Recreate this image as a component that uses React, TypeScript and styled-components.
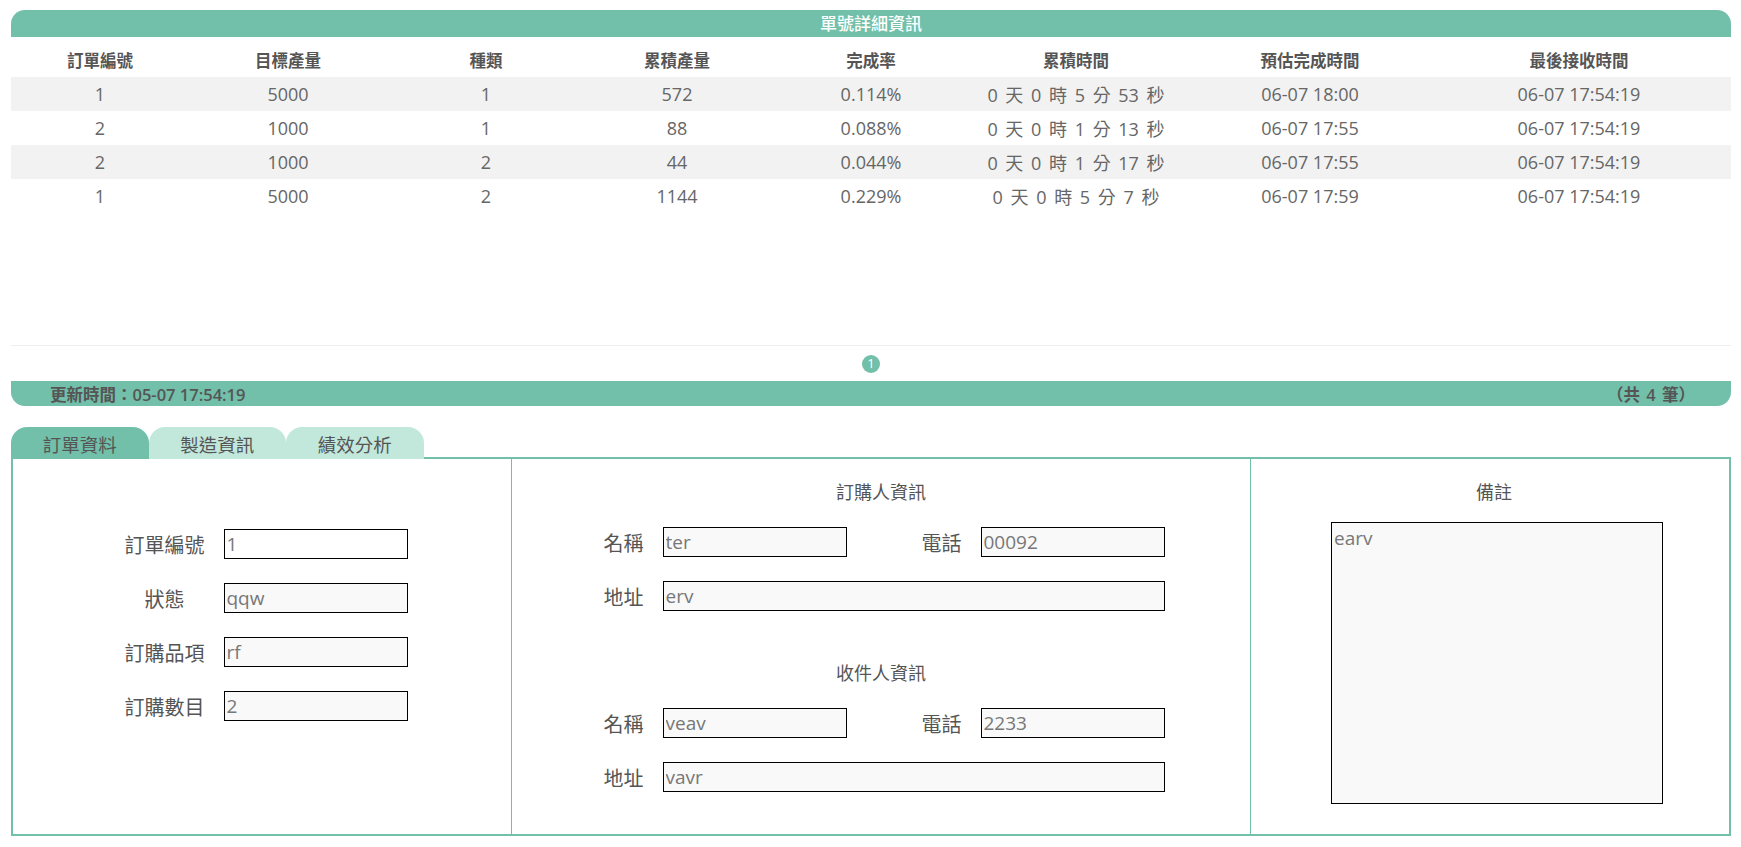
import React from "react";
import styled, { createGlobalStyle } from "styled-components";

const TEAL = "#72bfaa";
const TEAL_LIGHT = "#c2e8dc";
const FONT = `"Open Sans", "Noto Sans CJK TC", sans-serif`;

const Global = createGlobalStyle`
  html, body { margin: 0; padding: 0; background: #fff; }
  body { font-family: ${FONT}; color: #666; }
  * { box-sizing: border-box; }
`;

const Page = styled.div`
  padding: 10px 10px 0 11px;
  display: flex;
  flex-direction: column;
`;

const TitleBar = styled.div`
  height: 27px;
  background: ${TEAL};
  border-radius: 14px 14px 0 0;
  color: #fff;
  font-size: 17px;
  font-weight: 500;
  display: flex;
  align-items: center;
  justify-content: center;
  line-height: 1;
`;

const TableWrap = styled.div`
  min-height: 309px;
  border-bottom: 1px solid #eeeeee;
`;

const COLS = "178px 198px 198px 184px 204px 206px 262px 276px";

const HeadRow = styled.div`
  display: grid;
  grid-template-columns: ${COLS};
  height: 40px;
  align-items: center;
  padding-top: 5px;
`;

const HeadCell = styled.div`
  text-align: center;
  font-size: 16.5px;
  font-weight: 700;
  color: #555;
`;

const Row = styled.div<{ $striped: boolean }>`
  display: grid;
  grid-template-columns: ${COLS};
  height: 34px;
  align-items: center;
  background: ${(p) => (p.$striped ? "#f2f2f2" : "transparent")};
  &:first-of-type { height: 31px; }
`;

const Cell = styled.div<{ $spaced?: boolean }>`
  text-align: center;
  font-size: 18px;
  color: #666;
  white-space: nowrap;
  word-spacing: ${(p) => (p.$spaced ? "3px" : "normal")};
`;

const Pager = styled.div`
  height: 35px;
  display: flex;
  align-items: center;
  justify-content: center;
`;

const PageDot = styled.span`
  width: 18px;
  height: 18px;
  border-radius: 50%;
  background: ${TEAL};
  color: #fff;
  font-size: 13px;
  display: flex;
  align-items: center;
  justify-content: center;
  line-height: 1;
`;

const FooterBar = styled.div`
  height: 25px;
  background: ${TEAL};
  border-radius: 0 0 14px 14px;
  display: flex;
  align-items: center;
  justify-content: space-between;
  padding: 0 36px 0 39px;
  font-size: 16.5px;
  font-weight: 600;
  color: #555;
`;

const Count = styled.span`
  word-spacing: 2px;
`;

const Tabs = styled.div`
  display: flex;
  margin-top: 21px;
  margin-bottom: -2px;
  position: relative;
  z-index: 1;
`;

const Tab = styled.div<{ $active?: boolean }>`
  width: 137.5px;
  height: 32px;
  border-radius: 16px 16px 0 0;
  background: ${(p) => (p.$active ? TEAL : TEAL_LIGHT)};
  color: #555;
  font-size: 18.5px;
  display: flex;
  align-items: center;
  justify-content: center;
  padding-top: 2px;
`;

const Panel = styled.div`
  height: 379px;
  border: 2px solid ${TEAL};
  display: grid;
  grid-template-columns: 499px 739px 1fr;
`;

const Column = styled.div<{ $divider?: boolean }>`
  border-right: ${(p) => (p.$divider ? `1px solid ${TEAL}` : "none")};
  display: flex;
  flex-direction: column;
  align-items: center;
  padding-top: 20px;
`;

const LeftGrid = styled.div`
  margin-top: 50px;
  margin-left: 8px;
  display: grid;
  grid-template-columns: 80px 184px;
  column-gap: 19px;
  row-gap: 24px;
  grid-auto-rows: 30px;
  align-items: center;
`;

const Label = styled.span`
  font-size: 20px;
  color: #555;
  text-align: center;
  white-space: nowrap;
`;

const Field = styled.input<{ $white?: boolean }>`
  height: 30px;
  width: 100%;
  border: 1px solid #000;
  background: ${(p) => (p.$white ? "#fff" : "#f9f9f9")};
  font-family: ${FONT};
  font-size: 19px;
  color: #777;
  padding: 0 2px;
  margin: 0;
  border-radius: 0;
  outline: none;
`;

const SectionTitle = styled.div<{ $gapTop?: number }>`
  height: 26px;
  line-height: 26px;
  font-size: 18px;
  color: #555;
  margin-top: ${(p) => p.$gapTop ?? 0}px;
  margin-bottom: 22px;
  text-align: center;
`;

const MidGrid = styled.div`
  display: grid;
  grid-template-columns: 40px 184px 37px 40px 184px;
  column-gap: 19px;
  row-gap: 24px;
  grid-auto-rows: 30px;
  align-items: center;
  margin-left: 6px;
`;

const Wide = styled.div`
  grid-column: 2 / -1;
`;

const SecondLabel = styled(Label)`
  grid-column: 4;
`;

const NoteTitle = styled(SectionTitle)`
  margin-bottom: 17px;
  margin-left: 8px;
`;

const Note = styled.textarea`
  width: 332px;
  height: 282px;
  margin-left: 14px;
  border: 1px solid #000;
  background: #f9f9f9;
  font-family: ${FONT};
  font-size: 19px;
  color: #777;
  padding: 2px 2px;
  resize: none;
  border-radius: 0;
  outline: none;
`;

const headers = ["訂單編號", "目標產量", "種類", "累積產量", "完成率", "累積時間", "預估完成時間", "最後接收時間"];

const rows = [
  ["1", "5000", "1", "572", "0.114%", "0 天 0 時 5 分 53 秒", "06-07 18:00", "06-07 17:54:19"],
  ["2", "1000", "1", "88", "0.088%", "0 天 0 時 1 分 13 秒", "06-07 17:55", "06-07 17:54:19"],
  ["2", "1000", "2", "44", "0.044%", "0 天 0 時 1 分 17 秒", "06-07 17:55", "06-07 17:54:19"],
  ["1", "5000", "2", "1144", "0.229%", "0 天 0 時 5 分 7 秒", "06-07 17:59", "06-07 17:54:19"],
];

const leftFields = [
  ["訂單編號", "1"],
  ["狀態", "qqw"],
  ["訂購品項", "rf"],
  ["訂購數目", "2"],
];

function PersonBlock({ name, phone, addr }: { name: string; phone: string; addr: string }) {
  return (
    <MidGrid>
      <Label>名稱</Label>
      <Field readOnly value={name} />
      <SecondLabel>電話</SecondLabel>
      <Field readOnly value={phone} />
      <Label>地址</Label>
      <Wide>
        <Field readOnly value={addr} />
      </Wide>
    </MidGrid>
  );
}

export default function App() {
  return (
    <>
      <Global />
      <Page>
        <TitleBar>單號詳細資訊</TitleBar>
        <TableWrap>
          <HeadRow>
            {headers.map((h) => (
              <HeadCell key={h}>{h}</HeadCell>
            ))}
          </HeadRow>
          {rows.map((r, i) => (
            <Row key={i} $striped={i % 2 === 0}>
              {r.map((c, j) => (
                <Cell key={j} $spaced={j === 5}>{c}</Cell>
              ))}
            </Row>
          ))}
        </TableWrap>
        <Pager>
          <PageDot>1</PageDot>
        </Pager>
        <FooterBar>
          <span>更新時間：05-07 17:54:19</span>
          <Count>（共 4 筆）</Count>
        </FooterBar>
        <Tabs>
          <Tab $active>訂單資料</Tab>
          <Tab>製造資訊</Tab>
          <Tab>績效分析</Tab>
        </Tabs>
        <Panel>
          <Column $divider>
            <LeftGrid>
              {leftFields.map(([l, v], i) => (
                <React.Fragment key={l}>
                  <Label>{l}</Label>
                  <Field readOnly value={v} $white={i === 0} />
                </React.Fragment>
              ))}
            </LeftGrid>
          </Column>
          <Column $divider>
            <SectionTitle>訂購人資訊</SectionTitle>
            <PersonBlock name="ter" phone="00092" addr="erv" />
            <SectionTitle $gapTop={49}>收件人資訊</SectionTitle>
            <PersonBlock name="veav" phone="2233" addr="vavr" />
          </Column>
          <Column>
            <NoteTitle>備註</NoteTitle>
            <Note readOnly value="earv" />
          </Column>
        </Panel>
      </Page>
    </>
  );
}
